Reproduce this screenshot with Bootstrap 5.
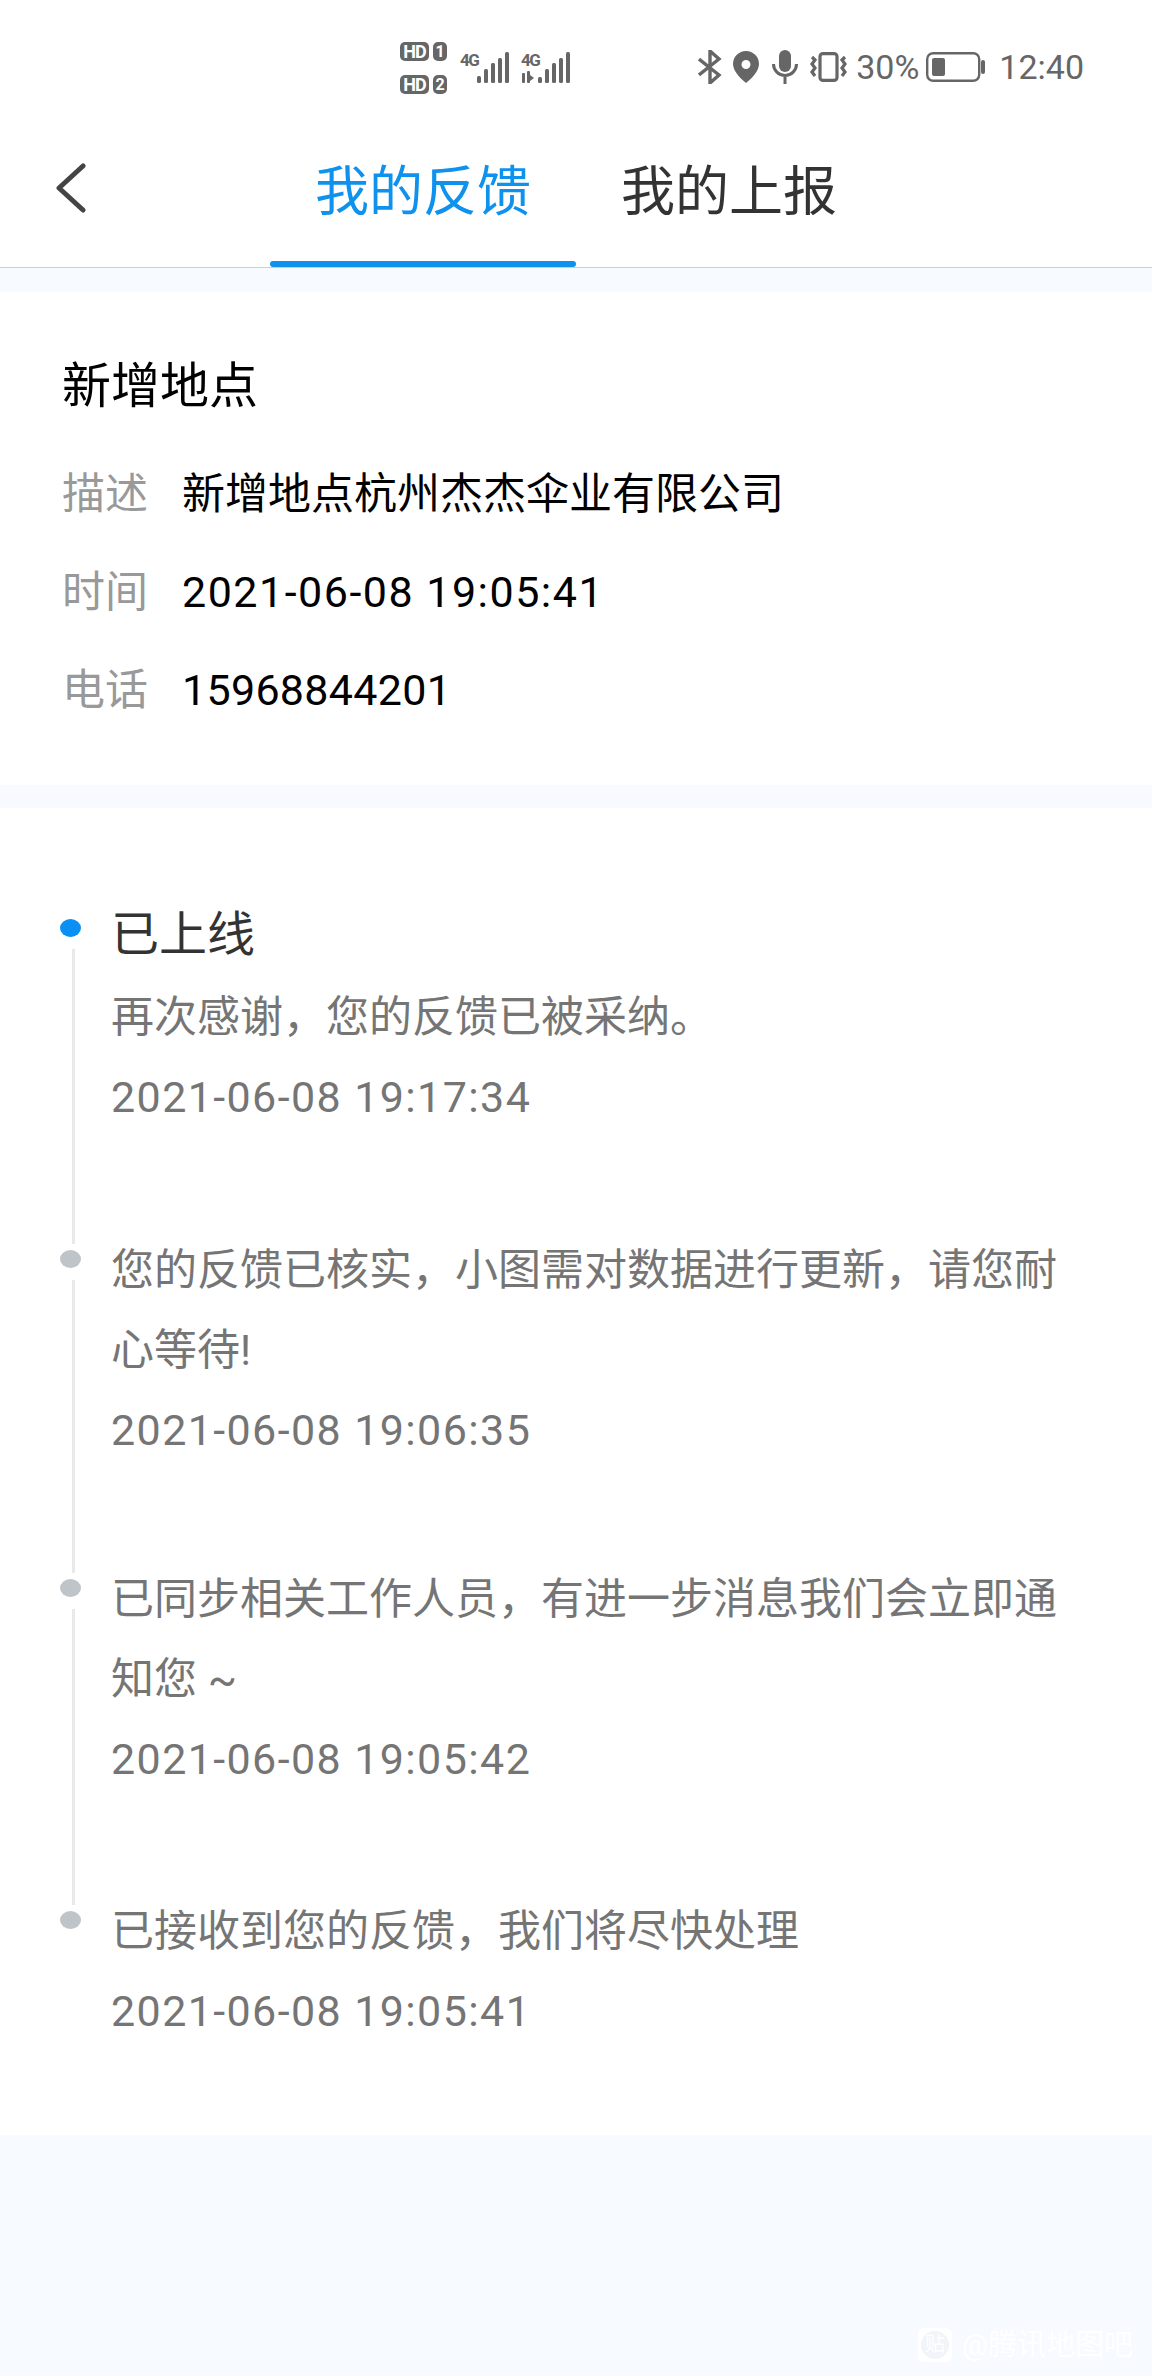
<!DOCTYPE html>
<html lang="zh-CN">
<head>
  <meta charset="UTF-8" />
  <meta name="viewport" content="width=device-width, initial-scale=1.0"/>
  <title>我的反馈</title>
  <link href="https://cdn.jsdelivr.net/npm/bootstrap@5.3.0/dist/css/bootstrap.min.css" rel="stylesheet" />
  <style>
    body {
      font-family: Roboto, "Noto Sans CJK SC", sans-serif;
      background: #f7faff;
      width: 1152px;
      height: 2376px;
      overflow: hidden;
    }
    .status-strip { height: 90px; background: #fff; color: #666; padding: 20px 68px 0 400px; }
    .hd-col { gap: 14px; width: 48px; margin-top: 22px; }
    .hd-tag { background: #666; color: #fff; font-size: 18px; font-weight: 700; line-height: 19px; height: 19px; border-radius: 5px; text-align: center; }
    .hd-a { width: 29px; letter-spacing: -1px; }
    .hd-b { width: 14px; margin-left: 4px; font-size: 16px; }
    .net-wrap { margin: 33px 0 0 12px; width: 49px; height: 30px; }
    .net-wrap + .net-wrap { width: 50px; }
    .net-label { position: absolute; left: 0; top: 0; font-size: 17px; line-height: 14px; font-weight: 700; letter-spacing: -1.500px; }
    .sys-icons { margin-top: 22px; height: 50px; }
    .batt-text { font-size: 34px; line-height: 40px; margin-left: 8px; }
    .clock-text { font-size: 34px; line-height: 40px; margin-left: 14px; }

    .top-tabs { height: 178px; background: #fff; border-bottom: 1px solid #ccd0d3; }
    .back-box { width: 270px; padding: 73px 0 0 56px; }
    .tab-cell { width: 306px; height: 177px; padding-top: 63px; font-size: 54px; line-height: 80px; color: #333; text-align: center; }
    .tab-cell.on { color: #0f92ee; }
    .tab-bar { height: 6px; margin-top: 28px; background: #0f92ee; border-radius: 3px; }

    .panel { background: #fff; }
    .panel-info { margin-top: 24px; height: 493px; padding: 56px 62px 0; color: #000; }
    .info-title { font-size: 49px; line-height: 78px; height: 78px; margin-bottom: 19px; font-weight: 400; }
    .info-row { font-size: 43px; height: 98px; line-height: 98px; }
    .info-key { width: 120px; color: #999; }
    .info-date { letter-spacing: 1.500px; }
    .info-tel { letter-spacing: .3px; }

    .panel-log { margin-top: 23px; height: 1327px; padding: 91px 62px 0 60px; }
    .log-item { padding-bottom: 89px; --gap-below: 89px; }
    .log-first { padding-bottom: 93px; --gap-below: 93px; }
    .log-third { padding-bottom: 92px; --gap-below: 92px; }
    .log-rail { width: 51px; flex: none; padding-top: 20px; }
    .log-dot { width: 21px; height: 18px; border-radius: 50%; background: #bfc4c8; }
    .log-dot.on { background: #0a8ff5; }
    .log-line { width: 3px; flex: 1; margin: 12px 0 calc(-14px - var(--gap-below)) 12px; background: #e7e9eb; }
    .log-body { width: 950px; font-size: 43px; line-height: 80px; color: #757575; }
    .log-title { font-size: 48px; line-height: 72px; margin-bottom: 6px; color: #333; }
    .log-date { letter-spacing: 1.400px; }

    .mark-strip { padding: 193px 19px 0 0; color: #fff; }
    .mark-ico { width: 34px; height: 34px; padding: 3px; background: #fff; border-radius: 6px; margin-right: 10px; }
    .mark-bubble { display: block; height: 28px; border-radius: 50%; background: #f1f4f8; color: #fff; font-size: 20px; line-height: 27px; text-align: center; }
    .mark-text { font-size: 29px; line-height: 34px; }
  </style>
</head>
<body>

  <div class="status-strip d-flex align-items-start">
    <div class="hd-col d-flex flex-column">
      <div class="d-flex"><span class="hd-tag hd-a">HD</span><span class="hd-tag hd-b">1</span></div>
      <div class="d-flex"><span class="hd-tag hd-a">HD</span><span class="hd-tag hd-b">2</span></div>
    </div>
    <div class="net-wrap position-relative">
      <span class="net-label">4G</span>
      <svg class="position-absolute" style="left:17px;top:-1px" width="33" height="31" viewBox="0 0 33 31" fill="#666">
        <rect x="0" y="24" width="4" height="7" rx="1.5"/><rect x="7" y="17" width="4" height="14" rx="1.5"/><rect x="14" y="11" width="4" height="20" rx="1.5"/><rect x="21" y="6" width="4" height="25" rx="1.5"/><rect x="28" y="0" width="4" height="31" rx="1.5"/>
      </svg>
    </div>
    <div class="net-wrap position-relative">
      <span class="net-label">4G</span>
      <svg class="position-absolute" style="left:0;top:-1px" width="50" height="31" viewBox="0 0 50 31" fill="#666">
        <rect x="1" y="21" width="3" height="10" rx="1"/><rect x="6" y="19" width="3" height="12" rx="1"/><path d="M9 23l4 3-4 3z"/><rect x="17" y="25" width="4" height="6" rx="1.5"/><rect x="24" y="17" width="4" height="14" rx="1.5"/><rect x="31" y="11" width="4" height="20" rx="1.5"/><rect x="38" y="6" width="4" height="25" rx="1.5"/><rect x="45" y="0" width="4" height="31" rx="1.5"/>
      </svg>
    </div>

    <div class="sys-icons d-flex align-items-center ms-auto">
      <svg width="25" height="34" viewBox="0 0 25 34" fill="none" stroke="#666" stroke-width="3.4"><path d="M1 9l20 16-9 8V1l9 8L1 25"/></svg>
      <svg style="margin-left:10px" width="26" height="32" viewBox="0 0 26 32"><path fill="#666" fill-rule="evenodd" d="M13 0a13 13 0 0 1 13 13c0 7-7 14-13 19C7 27 0 20 0 13A13 13 0 0 1 13 0zm0 9a4.500 4.500 0 1 0 0 9 4.500 4.500 0 0 0 0-9z"/></svg>
      <svg style="margin-left:13px" width="26" height="34" viewBox="0 0 26 34" fill="none" stroke="#666" stroke-width="3"><rect x="7" y="0" width="12" height="22" rx="6" fill="#666" stroke="none"/><path d="M1.500 14a11.500 11.500 0 0 0 23 0M13 25.500V34"/></svg>
      <svg style="margin-left:11px" width="39" height="30" viewBox="0 0 39 30" fill="none" stroke="#666" stroke-width="3.200"><rect x="11" y="1.600" width="17" height="26.800" rx="3"/><path d="M3 5l3 3-3 4 3 4-3 4 3 4M36 5l-3 3 3 4-3 4 3 4-3 4"/></svg>
      <span class="batt-text">30%</span>
      <svg style="margin-left:7px" width="59" height="30" viewBox="0 0 59 30" fill="none"><rect x="1.200" y="1.200" width="52" height="27.600" rx="6" stroke="#666" stroke-width="2.400"/><rect x="6" y="6" width="13" height="18" rx="2" fill="#666"/><rect x="55" y="8" width="4" height="14" rx="2" fill="#666"/></svg>
      <span class="clock-text">12:40</span>
    </div>
  </div>

  <div class="top-tabs d-flex">
    <div class="back-box">
      <svg width="30" height="50" viewBox="0 0 30 50" fill="none" stroke="#444" stroke-width="5" stroke-linecap="round" stroke-linejoin="round"><path d="M27 3L3 25l24 22"/></svg>
    </div>
    <div class="tab-cell on">我的反馈<div class="tab-bar"></div></div>
    <div class="tab-cell">我的上报</div>
  </div>

  <div class="panel panel-info">
    <h1 class="info-title">新增地点</h1>
    <div class="info-row d-flex"><span class="info-key">描述</span><span>新增地点杭州杰杰伞业有限公司</span></div>
    <div class="info-row d-flex"><span class="info-key">时间</span><span class="info-date">2021-06-08 19:05:41</span></div>
    <div class="info-row d-flex"><span class="info-key">电话</span><span class="info-tel">15968844201</span></div>
  </div>

  <div class="panel panel-log">
    <div class="log-item log-first d-flex">
      <div class="log-rail d-flex flex-column"><div class="log-dot on"></div><div class="log-line"></div></div>
      <div class="log-body">
        <div class="log-title">已上线</div>
        <div>再次感谢&#xFF0C;您的反馈已被采纳。</div>
        <div class="log-date">2021-06-08 19:17:34</div>
      </div>
    </div>
    <div class="log-item d-flex">
      <div class="log-rail d-flex flex-column"><div class="log-dot"></div><div class="log-line"></div></div>
      <div class="log-body">
        <div>您的反馈已核实&#xFF0C;小图需对数据进行更新&#xFF0C;请您耐心等待!</div>
        <div class="log-date">2021-06-08 19:06:35</div>
      </div>
    </div>
    <div class="log-item log-third d-flex">
      <div class="log-rail d-flex flex-column"><div class="log-dot"></div><div class="log-line"></div></div>
      <div class="log-body">
        <div>已同步相关工作人员&#xFF0C;有进一步消息我们会立即通知您 ~</div>
        <div class="log-date">2021-06-08 19:05:42</div>
      </div>
    </div>
    <div class="log-item d-flex">
      <div class="log-rail d-flex flex-column"><div class="log-dot"></div></div>
      <div class="log-body">
        <div>已接收到您的反馈&#xFF0C;我们将尽快处理</div>
        <div class="log-date">2021-06-08 19:05:41</div>
      </div>
    </div>
  </div>

  <div class="mark-strip d-flex justify-content-end">
    <div class="mark-ico"><span class="mark-bubble">贴</span></div>
    <div class="mark-text">@腾讯地图吧</div>
  </div>

</body>
</html>
